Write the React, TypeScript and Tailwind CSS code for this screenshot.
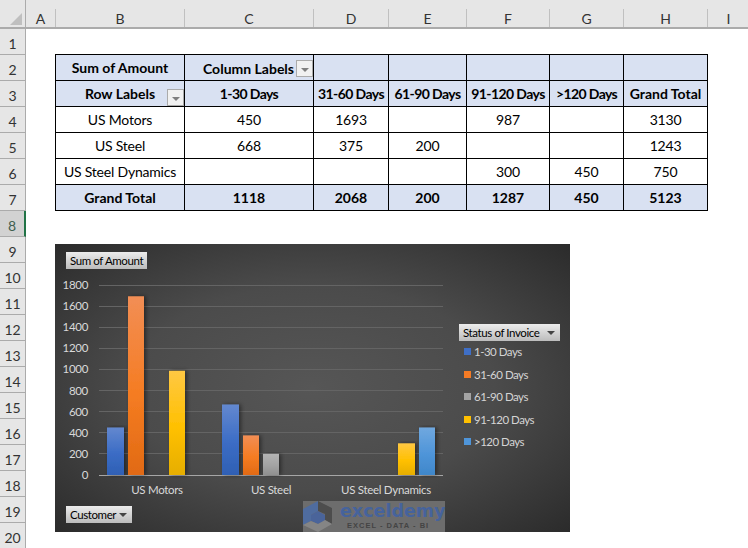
const columns = [
  { label: "A", width: "w-[30px]" },
  { label: "B", width: "w-[129px]" },
  { label: "C", width: "w-[129px]" },
  { label: "D", width: "w-[75px]" },
  { label: "E", width: "w-[78px]" },
  { label: "F", width: "w-[83px]" },
  { label: "G", width: "w-[74px]" },
  { label: "H", width: "w-[84px]" },
  { label: "I", width: "w-[41px]" },
]

const rowNumbers = Array.from({ length: 20 }, (_, i) => i + 1)

const bodyRows = [
  ["US Motors", "450", "1693", "", "987", "", "3130"],
  ["US Steel", "668", "375", "200", "", "", "1243"],
  ["US Steel Dynamics", "", "", "", "300", "450", "750"],
]

const totals = ["Grand Total", "1118", "2068", "200", "1287", "450", "5123"]
const dayHeaders = ["1-30 Days", "31-60 Days", "61-90 Days", "91-120 Days", ">120 Days"]

// bar positions are relative to the chart box
const zeroY = 231
const unit = 190 / 1800
const bars = [
  { x: 52, w: 17, v: 450, fill: "blue" },
  { x: 73, w: 16, v: 1693, fill: "orange" },
  { x: 114, w: 16, v: 987, fill: "yellow" },
  { x: 167, w: 17, v: 668, fill: "blue" },
  { x: 188, w: 16, v: 375, fill: "orange" },
  { x: 208, w: 16, v: 200, fill: "gray" },
  { x: 343, w: 17, v: 300, fill: "yellow" },
  { x: 364, w: 16, v: 450, fill: "sky" },
]

const gradients = [
  { id: "blue", stops: ["#6388cf", "#3b6cc5", "#2f60b4"] },
  { id: "orange", stops: ["#f28e55", "#f57c22", "#e16a14"] },
  { id: "gray", stops: ["#b4b4b4", "#a3a3a3", "#909090"] },
  { id: "yellow", stops: ["#ffc843", "#ffc000", "#e6ae00"] },
  { id: "sky", stops: ["#70a8df", "#4f95d9", "#3f87ca"] },
]

const legend = [
  { label: "1-30 Days", color: "bg-[#3f6fc6]" },
  { label: "31-60 Days", color: "bg-[#f47b25]" },
  { label: "61-90 Days", color: "bg-[#a3a3a3]" },
  { label: "91-120 Days", color: "bg-[#ffc000]" },
  { label: ">120 Days", color: "bg-[#4f95d9]" },
]

function FilterButton() {
  return (
    <span className="flex h-[17px] w-[17px] items-center justify-center border border-[#ababab] bg-[#f1f1f1]">
      <span className="mt-[3px] border-x-[4px] border-t-[4px] border-x-transparent border-t-[#7f7f7f]" />
    </span>
  )
}

function ChartButton({ label, arrow, className }: { label: string; arrow?: boolean; className: string }) {
  return (
    <div
      className={`absolute flex h-[17px] items-center justify-between bg-gradient-to-b from-[#ececec] to-[#bcbcbc] px-[4px] text-[11.5px] tracking-[-0.4px] whitespace-nowrap text-black ${className}`}
    >
      <span>{label}</span>
      {arrow && <span className="mr-[1px] border-x-[4px] border-t-[4px] border-x-transparent border-t-[#444444]" />}
    </div>
  )
}

function Watermark() {
  return (
    <div className="absolute bottom-0 left-[248px] flex h-[31px] w-[142px] bg-[#6d6d6d]">
      <svg width="34" height="31" viewBox="0 0 34 31" className="shrink-0">
        <polygon points="0,8 15,0 15,10 8,14 8,20 0,24" fill="#4f6c9f" />
        <polygon points="15,0 29,7 29,23 22,19 22,13 15,10" fill="#4d4d4d" />
        <polygon points="8,14 15,10 22,14 22,20 15,23 8,20" fill="#4a649a" />
        <polygon points="0,24 8,20 15,23 22,19 29,23 15,31" fill="#858585" />
      </svg>
      <div className="flex min-w-0 flex-col items-start pl-[3px]">
        <span className="text-[17.5px] leading-[21px] font-bold text-[#46639c] [font-family:'DejaVu_Sans',sans-serif]">
          exceldemy
        </span>
        <span className="pl-[7px] text-[7.5px] leading-[8px] font-bold tracking-[1px] whitespace-nowrap text-[#444444] [font-family:'Liberation_Sans',sans-serif]">
          EXCEL - DATA - BI
        </span>
      </div>
    </div>
  )
}

function PivotChart() {
  return (
    <div className="relative h-[288px] w-[515px] overflow-hidden bg-[radial-gradient(ellipse_at_center,#565656_0%,#4b4b4b_50%,#2b2b2b_100%)]">
      <svg width="515" height="288" viewBox="0 0 515 288" className="absolute inset-0">
        <defs>
          {gradients.map((g) => (
            <linearGradient key={g.id} id={g.id} x1="0" y1="0" x2="0" y2="1">
              <stop offset="0" stopColor={g.stops[0]} />
              <stop offset="0.55" stopColor={g.stops[1]} />
              <stop offset="1" stopColor={g.stops[2]} />
            </linearGradient>
          ))}
          <filter id="barShadow" x="-30%" y="-5%" width="170%" height="110%">
            <feDropShadow dx="2" dy="0" stdDeviation="2" floodColor="#000000" floodOpacity="0.45" />
          </filter>
        </defs>
        {[200, 400, 600, 800, 1000, 1200, 1400, 1600, 1800].map((v) => (
          <line
            key={v}
            x1="44"
            x2="388"
            y1={zeroY - v * unit}
            y2={zeroY - v * unit}
            stroke="#646464"
            strokeWidth="1"
            shapeRendering="crispEdges"
          />
        ))}
        <line x1="44" x2="388" y1={zeroY} y2={zeroY} stroke="#a6a6a6" strokeWidth="1" shapeRendering="crispEdges" />
        {bars.map((b) => (
          <rect
            key={b.x}
            x={b.x}
            y={zeroY - b.v * unit}
            width={b.w}
            height={b.v * unit}
            fill={`url(#${b.fill})`}
            filter="url(#barShadow)"
          />
        ))}
        <g fill="#d9d9d9" fontSize="11.5" letterSpacing="-0.3" textAnchor="end">
          {[0, 200, 400, 600, 800, 1000, 1200, 1400, 1600, 1800].map((v) => (
            <text key={v} x="33" y={zeroY - v * unit + 4}>
              {v}
            </text>
          ))}
        </g>
        <g fill="#d9d9d9" fontSize="11.5" letterSpacing="-0.3" textAnchor="middle">
          <text x="102" y="250">US Motors</text>
          <text x="216" y="250">US Steel</text>
          <text x="331" y="250">US Steel Dynamics</text>
        </g>
      </svg>

      <ChartButton label="Sum of Amount" className="top-[8px] left-[11px] w-[81px]" />
      <ChartButton label="Customer" arrow className="top-[262px] left-[11px] w-[66px]" />
      <ChartButton label="Status of Invoice" arrow className="top-[80px] left-[404px] w-[101px]" />

      <div className="absolute top-[96px] left-[409px] flex flex-col gap-[5px] pt-[3px] text-[11.5px] leading-[17.5px] tracking-[-0.5px] text-[#d4d4d4]">
        {legend.map((item) => (
          <div key={item.label} className="flex items-center gap-[3px]">
            <span className={`h-[7px] w-[7px] ${item.color}`} />
            <span>{item.label}</span>
          </div>
        ))}
      </div>

      <Watermark />
    </div>
  )
}

export default function App() {
  return (
    <div className="h-[548px] w-[748px] overflow-hidden bg-white text-[14px] text-black [font-family:Lato,sans-serif]">
      {/* Column letters */}
      <div className="flex h-[29px] border-b-2 border-[#ababab] bg-[#e6e6e6]">
        <div className="relative w-[26px] shrink-0 border-r border-[#ababab]">
          <div className="absolute top-[13px] left-[10px] h-0 w-0 border-b-[12px] border-l-[12px] border-b-[#bfbfbf] border-l-transparent" />
        </div>
        {columns.map((c) => (
          <div key={c.label} className={`${c.width} mt-[9px] flex shrink-0 items-center justify-center border-r border-[#c0c0c0] text-[#333333] last:border-r-0`}>
            {c.label}
          </div>
        ))}
      </div>

      <div className="flex">
        {/* Row numbers */}
        <div className="w-[26px] shrink-0 border-r border-[#ababab]">
          {rowNumbers.map((n) => (
            <div
              key={n}
              className={
                n === 8
                  ? "-mr-px flex h-[26px] items-center justify-center border-r-2 border-b border-r-[#217346] border-b-[#ababab] bg-[#d2d2d2] pt-[3px] text-[#3f5f4f]"
                  : "flex h-[26px] items-center justify-center border-b border-[#ababab] bg-[#e6e6e6] pt-[3px] text-[#333333]"
              }
            >
              {n}
            </div>
          ))}
        </div>

        {/* Sheet */}
        <div className="pt-[25px] pl-[29px]">
          <table className="w-[653px] table-fixed border-collapse text-center">
            <colgroup>
              <col className="w-[129px]" />
              <col className="w-[129px]" />
              <col className="w-[75px]" />
              <col className="w-[78px]" />
              <col className="w-[83px]" />
              <col className="w-[74px]" />
              <col className="w-[84px]" />
            </colgroup>
            <tbody>
              <tr className="h-[26px] bg-[#d9e1f2] font-bold">
                <td className="border border-black p-0">Sum of Amount</td>
                <td className="border border-black p-0">
                  <div className="flex items-center justify-end gap-[2px] pt-[1px]">
                    <span>Column Labels</span>
                    <FilterButton />
                  </div>
                </td>
                {[0, 1, 2, 3, 4].map((i) => (
                  <td key={i} className="border border-black p-0" />
                ))}
              </tr>
              <tr className="h-[26px] bg-[#d9e1f2] font-bold">
                <td className="relative border border-black p-0">
                  Row Labels
                  <div className="absolute right-0 bottom-0">
                    <FilterButton />
                  </div>
                </td>
                {dayHeaders.map((h) => (
                  <td key={h} className="border border-black p-0 tracking-[-0.6px] whitespace-nowrap">
                    {h}
                  </td>
                ))}
                <td className="border border-black p-0 whitespace-nowrap">Grand Total</td>
              </tr>
              {bodyRows.map((row) => (
                <tr key={row[0]} className="h-[26px]">
                  {row.map((cell, i) => (
                    <td key={i} className="border border-black p-0 tracking-[-0.2px] whitespace-nowrap">
                      {cell}
                    </td>
                  ))}
                </tr>
              ))}
              <tr className="h-[26px] bg-[#d9e1f2] font-bold">
                {totals.map((cell, i) => (
                  <td key={i} className="border border-black p-0">
                    {cell}
                  </td>
                ))}
              </tr>
            </tbody>
          </table>

          <div className="mt-[33px]">
            <PivotChart />
          </div>
        </div>
      </div>
    </div>
  )
}
